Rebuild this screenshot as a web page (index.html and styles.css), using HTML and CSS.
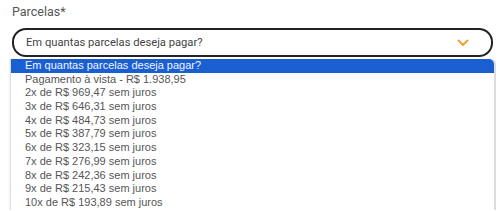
FILE: index.html
```html
<!DOCTYPE html>
<html lang="pt-BR">
<head>
    <meta charset="UTF-8">
    <meta name="viewport" content="width=device-width, initial-scale=1.0">
    <title>Parcelas</title>
    <link rel="stylesheet" href="styles.css">
</head>
<body>
    <div class="field">
        <label class="field-label" for="parcelas">Parcelas*</label>

        <div class="select-box" id="parcelas">
            <span class="select-text">Em quantas parcelas deseja pagar?</span>
            <svg class="chevron" width="12" height="8" viewBox="0 0 12 8">
                <path d="M1.5 1.5 L6 6 L10.5 1.5" fill="none" stroke="#f0a030" stroke-width="2" stroke-linecap="round" stroke-linejoin="round"/>
            </svg>
        </div>

        <ul class="options">
            <li class="option selected">Em quantas parcelas deseja pagar?</li>
            <li class="option">Pagamento à vista - R$ 1.938,95</li>
            <li class="option">2x de R$ 969,47 sem juros</li>
            <li class="option">3x de R$ 646,31 sem juros</li>
            <li class="option">4x de R$ 484,73 sem juros</li>
            <li class="option">5x de R$ 387,79 sem juros</li>
            <li class="option">6x de R$ 323,15 sem juros</li>
            <li class="option">7x de R$ 276,99 sem juros</li>
            <li class="option">8x de R$ 242,36 sem juros</li>
            <li class="option">9x de R$ 215,43 sem juros</li>
            <li class="option">10x de R$ 193,89 sem juros</li>
        </ul>
    </div>
</body>
</html>
```

FILE: styles.css
```css
body {
    margin: 0;
    padding: 0;
    background-color: #fff;
    font-family: 'Liberation Sans', Arial, sans-serif;
    overflow: hidden;
}

.field {
    padding: 4px 7px 0 12px;
}

.field-label {
    display: block;
    font-family: Roboto, 'Liberation Sans', sans-serif;
    font-size: 12.5px;
    line-height: 16px;
    color: #555;
    margin-bottom: 8px;
}

.select-box {
    display: flex;
    align-items: center;
    justify-content: space-between;
    height: 25px;
    padding: 0 22px 0 12px;
    border: 2px solid #222;
    border-radius: 14px;
}

.select-text {
    font-family: Roboto, 'Liberation Sans', sans-serif;
    font-size: 11.2px;
    color: #444;
}

.chevron {
    display: block;
}

.options {
    list-style: none;
    margin: 2px -3px 0 -2px;
    padding: 0;
    border-left: 1px solid #ddd;
    border-right: 2px solid #ddd;
    border-radius: 0 5px 0 0;
    box-shadow: -1px 0 2px rgba(0, 0, 0, 0.06);
}

.option {
    height: 13.7px;
    line-height: 13.7px;
    padding-left: 14px;
    font-size: 11px;
    color: #555;
    white-space: nowrap;
}

.option.selected {
    background-color: #1a5fd2;
    color: #f2f6ff;
    border-radius: 0 5px 0 0;
}
```
